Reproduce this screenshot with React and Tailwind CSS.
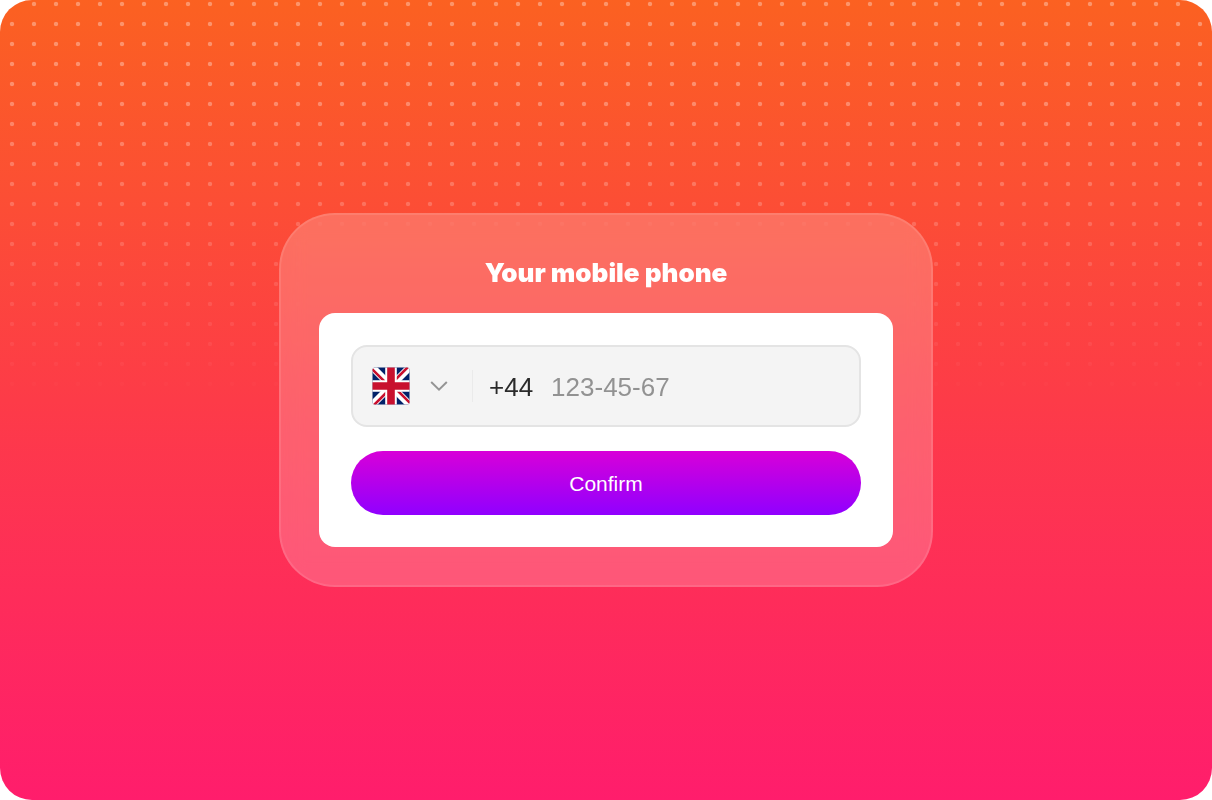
import { useState } from "react";

function FlagUK() {
  return (
    <svg viewBox="0 0 38 38" className="size-[38px]" aria-hidden="true">
      <defs>
        <clipPath id="flag-frame">
          <rect x="0.5" y="0.5" width="37" height="37" rx="2.5" />
        </clipPath>
      </defs>
      <g clipPath="url(#flag-frame)">
        <rect width="38" height="38" fill="#012169" />
        <path d="M0 0 38 38M38 0 0 38" stroke="#fff" strokeWidth="7.2" />
        <path d="M-1 1 18 20M20 18 39 37M37 -1 18 18M20 20 1 39" stroke="#c8102e" strokeWidth="2.6" />
        <path d="M19 0V38M0 19H38" stroke="#fff" strokeWidth="11.6" />
        <path d="M19 0V38M0 19H38" stroke="#c8102e" strokeWidth="7.6" />
      </g>
    </svg>
  );
}

function ChevronDown() {
  return (
    <svg viewBox="0 0 18 10" className="h-[10px] w-[18px]" fill="none" aria-hidden="true">
      <path d="M1.2 1 9 8.6 16.8 1" stroke="#949494" strokeWidth="2" />
    </svg>
  );
}

export default function App() {
  const [phone, setPhone] = useState("");

  return (
    <div className="min-h-screen bg-white font-['Liberation_Sans',Arial,sans-serif]">
      <main className="relative isolate flex min-h-screen items-center justify-center overflow-hidden rounded-[32px] bg-linear-to-b/srgb from-[#fb6121] via-[#fd3b48] to-[#ff1d6c]">
        <div className="absolute inset-x-0 top-0 -z-10 h-[400px] bg-[radial-gradient(circle_at_12px_4px,rgba(255,255,255,0.33)_1.8px,transparent_2.6px)] bg-[length:22px_20px] mask-linear-180 mask-linear-from-20% mask-linear-to-100%" />
        <form
          onSubmit={(e) => e.preventDefault()}
          className="flex w-full max-w-[654px] flex-col rounded-[56px] border-2 border-white/10 bg-white/20 p-[38px] backdrop-blur-md"
        >
          <label
            htmlFor="phone"
            className="mt-1 mb-6 text-center font-['Inter',sans-serif] text-[26px] leading-8 font-black text-white"
          >
            Your mobile phone
          </label>
          <div className="flex flex-col gap-6 rounded-2xl bg-white p-8">
            <div className="flex h-[82px] items-center rounded-2xl border-2 border-[#e4e4e4] bg-[#f4f4f4] pr-4 pl-[19px]">
              <button type="button" aria-label="Country: United Kingdom" className="flex items-center gap-5">
                <FlagUK />
                <ChevronDown />
              </button>
              <span className="mr-4 ml-6 h-8 w-px bg-[#eaeaea]" />
              <span className="pt-0.5 text-[26px] leading-8 text-[#2a2a2a]">+44</span>
              <input
                id="phone"
                type="tel"
                value={phone}
                onChange={(e) => setPhone(e.target.value)}
                placeholder="123-45-67"
                className="ml-[18px] min-w-0 flex-1 bg-transparent pt-0.5 text-[26px] leading-8 text-[#2a2a2a] outline-none placeholder:text-[#929292]"
              />
            </div>
            <button
              type="submit"
              className="h-16 rounded-full bg-linear-to-b/srgb from-[#d800d8] to-[#9000ff] pt-0.5 text-[21px] text-white"
            >
              Confirm
            </button>
          </div>
        </form>
      </main>
    </div>
  );
}
